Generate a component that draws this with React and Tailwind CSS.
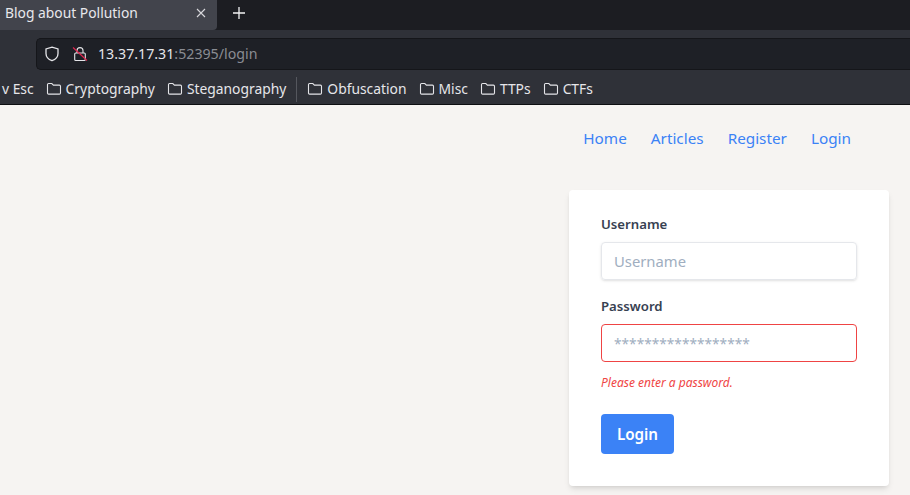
import React from 'react';

const font = { fontFamily: '"Noto Sans", sans-serif' };

const FolderIcon = () => (
  <svg width="16" height="16" viewBox="0 0 16 16" fill="none" stroke="#e4e4e8" strokeWidth="1.1" className="shrink-0">
    <path d="M1.5 12.5V3.6c0-.6.5-1.1 1.1-1.1h3.2l1.6 1.6h6c.6 0 1.1.5 1.1 1.1v6.8c0 .6-.5 1.1-1.1 1.1H2.6c-.6 0-1.1-.5-1.1-1.1z" />
  </svg>
);

const Bookmark = ({ name }) => (
  <div className="flex items-center gap-[4px] shrink-0">
    <FolderIcon />
    <span>{name}</span>
  </div>
);

const BrowserChrome = () => (
  <div className="text-[13.85px] text-[#e6e6ea]">
    <div className="flex h-[30px] items-stretch bg-[#1c1d22]">
      <div className="flex w-[217px] items-center justify-between rounded-br-[4px] bg-[#42444c] pb-[4px] pl-[5px] pr-[11px]">
        <span className="text-[#e8e8ec]">Blog about Pollution</span>
        <svg width="10" height="10" viewBox="0 0 10 10" stroke="#d8d8dc" strokeWidth="1.1">
          <path d="M1 1l8 8M9 1l-8 8" />
        </svg>
      </div>
      <div className="flex items-center pb-[4px] pl-[16px]">
        <svg width="12" height="12" viewBox="0 0 12 12" stroke="#f2f2f4" strokeWidth="1.3">
          <path d="M6 0v12M0 6h12" />
        </svg>
      </div>
    </div>
    <div className="flex h-[40px] items-start bg-[#2f3138] pl-[36px] pt-[8px]">
      <div className="flex h-[32px] flex-1 items-center rounded-l-[5px] border border-r-0 border-[#15161a] bg-[#1e2026] pl-[7px]">
        <svg width="16" height="16" viewBox="0 0 16 16" fill="none" stroke="#e4e4e8" strokeWidth="1.3">
          <path d="M8 1.2l6 1.7v4.6c0 3.4-2.6 5.9-6 7.2-3.4-1.3-6-3.8-6-7.2V2.9z" />
        </svg>
        <svg width="16" height="16" viewBox="0 0 16 16" fill="none" className="ml-[12px]">
          <path d="M5 7V4.6a3 3 0 0 1 6 0V7" stroke="#e4e4e8" strokeWidth="1.1" />
          <rect x="2.7" y="7" width="10.6" height="7.5" rx="1" stroke="#e4e4e8" strokeWidth="1.1" />
          <path d="M1 1.5l14 13" stroke="#e2254f" strokeWidth="1.1" />
        </svg>
        <span className="ml-[10px] text-[14.2px]">
          13.37.17.31<span className="text-[#8a8c93]">:52395/login</span>
        </span>
      </div>
    </div>
    <div className="flex h-[35px] items-center overflow-hidden border-b border-[#0e0f12] bg-[#2f3138] pt-[5px]">
      <span className="ml-[2px] shrink-0 pr-[12px]">v Esc</span>
      <div className="flex items-center gap-[12px]">
        <Bookmark name="Cryptography" />
        <Bookmark name="Steganography" />
      </div>
      <div className="mx-[10px] h-[25px] w-px bg-[#55575e]" />
      <div className="flex items-center gap-[12px]">
        <Bookmark name="Obfuscation" />
        <Bookmark name="Misc" />
        <Bookmark name="TTPs" />
        <Bookmark name="CTFs" />
      </div>
    </div>
  </div>
);

const App = () => {
  return (
    <div className="h-[495px] w-[910px] overflow-hidden bg-[#f6f4f2]" style={font}>
      <BrowserChrome />
      <nav className="flex justify-end gap-[24px] pr-[59px] pt-[21px] text-[15.3px] leading-[24px] text-[#3b82f6]">
        <a href="#">Home</a>
        <a href="#">Articles</a>
        <a href="#">Register</a>
        <a href="#">Login</a>
      </nav>
      <div className="flex justify-end pr-[21px] pt-[40px]">
        <form className="w-[320px] rounded-[4px] bg-white px-[32px] pb-[32px] pt-[24px] shadow-md">
          <label className="mb-[8px] block text-[13.2px] font-semibold leading-[20px] text-[#374151]">Username</label>
          <input
            placeholder="Username"
            className="mb-[16px] block h-[38px] w-full rounded-[4px] border border-[#e5e7eb] px-[12px] text-[14.8px] shadow placeholder:text-[#a0aec0]"
          />
          <label className="mb-[8px] block text-[13.2px] font-semibold leading-[20px] text-[#374151]">Password</label>
          <input
            placeholder="******************"
            className="mb-[13px] block h-[38px] w-full rounded-[4px] border border-[#ef4444] px-[12px] text-[13.7px] placeholder:text-[#a0aec0]"
          />
          <p className="mb-[23px] text-[12px] italic leading-[16px] text-[#ef4444]">Please enter a password.</p>
          <button type="button" className="h-[40px] w-[73px] rounded-[4px] bg-[#3b82f6] text-[15.2px] font-semibold text-white">
            Login
          </button>
        </form>
      </div>
    </div>
  );
};

export default App;
